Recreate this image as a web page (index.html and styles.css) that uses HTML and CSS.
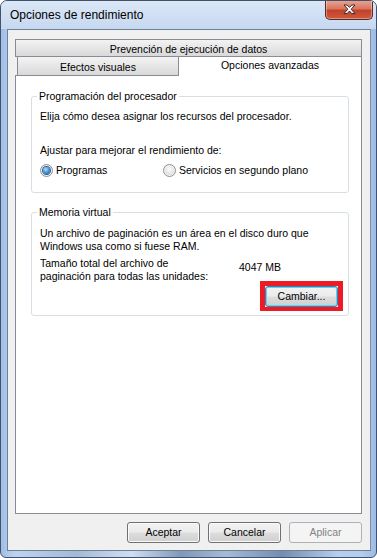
FILE: index.html
```html
<!DOCTYPE html>
<html lang="es">
<head>
  <meta charset="UTF-8">
  <title>Opciones de rendimiento</title>
  <link rel="stylesheet" href="styles.css">
</head>
<body>
  <div class="window">
    <!-- Barra de título -->
    <div class="titlebar">
      <span class="title">Opciones de rendimiento</span>
      <button class="close" title="Cerrar">
        <svg width="13" height="11" viewBox="0 0 13 11">
          <polygon points="1,1 4.2,1 6.5,3.4 8.8,1 12,1 8.2,5.2 12,9.6 8.8,9.6 6.5,7 4.2,9.6 1,9.6 4.8,5.2" fill="#fff" stroke="#3a2a28" stroke-width="1" stroke-linejoin="round"/>
        </svg>
      </button>
    </div>

    <div class="client">
      <!-- Pestañas -->
      <div class="tabs">
        <div class="tab-row">
          <div class="tab wide">Prevención de ejecución de datos</div>
        </div>
        <div class="tab-row second">
          <div class="tab visual">Efectos visuales</div>
          <div class="tab active">Opciones avanzadas</div>
        </div>
      </div>

      <div class="panel">
        <fieldset class="group cpu">
          <legend>Programación del procesador</legend>
          <p>Elija cómo desea asignar los recursos del procesador.</p>
          <p class="adjust">Ajustar para mejorar el rendimiento de:</p>
          <div class="radios">
            <label class="radio first"><span class="dot checked"></span>Programas</label>
            <label class="radio"><span class="dot"></span>Servicios en segundo plano</label>
          </div>
        </fieldset>

        <fieldset class="group memory">
          <legend>Memoria virtual</legend>
          <p>Un archivo de paginación es un área en el disco duro que<br>Windows usa como si fuese RAM.</p>
          <div class="size-row">
            <p>Tamaño total del archivo de<br>paginación para todas las unidades:</p>
            <span class="size">4047 MB</span>
          </div>
          <div class="change-row">
            <span class="highlight"><button class="btn focus">Cambiar...</button></span>
          </div>
        </fieldset>
      </div>

      <div class="actions">
        <button class="btn">Aceptar</button>
        <button class="btn">Cancelar</button>
        <button class="btn" disabled>Aplicar</button>
      </div>
    </div>
  </div>
</body>
</html>
```

FILE: styles.css
```css
* { box-sizing: border-box; }

body {
  margin: 0;
  font-family: "Liberation Sans", Arial, sans-serif;
  font-size: 10.5px;
  line-height: 13px;
  color: #000;
  background: #fff;
}

p { margin: 0; }

.window {
  width: 377px;
  height: 558px;
  display: flex;
  flex-direction: column;
  border: 1px solid #43526a;
  border-radius: 7px 7px 6px 6px;
  background:
    linear-gradient(90deg, transparent 2%, rgba(50,80,120,0.25) 20%, transparent 35%, rgba(40,70,110,0.45) 48%, rgba(40,70,110,0.2) 60%, rgba(40,70,110,0.5) 75%, transparent 90%) left bottom / 100% 6px no-repeat,
    linear-gradient(90deg, #9fbde6 0%, #c2d7f1 4%, #cfdff3 30%, #c2d6ef 70%, #b4cdec 96%, #9dbbe5 100%);
  overflow: hidden;
}

/* barra de título */
.titlebar {
  height: 28px;
  display: flex;
  align-items: flex-start;
  padding-left: 9px;
  background: linear-gradient(#dbe7f6, #c6d8f0);
}

.title {
  font-size: 12px;
  line-height: 28px;
}

.close {
  margin: -1px 3px 0 auto;
  width: 48px;
  height: 20px;
  padding: 0;
  border: 1px solid #5b2a22;
  border-top: none;
  border-radius: 0 0 5px 5px;
  background: linear-gradient(#e9a899 0%, #d9775f 45%, #c2412a 55%, #cf5a3e 100%);
  box-shadow: inset 0 0 0 1px rgba(255,255,255,0.35);
  display: flex;
  align-items: center;
  justify-content: center;
}

/* área cliente */
.client {
  margin: 0 5px 6px 6px;
  height: 522px;
  border: 1px solid #6e7f98;
  border-right-color: #7d8da4;
  background: #f0f0f0;
  padding: 9px 8px 7px 7px;
  display: flex;
  flex-direction: column;
}

.tab-row {
  display: flex;
}

.tab {
  border: 1px solid #898c95;
  background: linear-gradient(#f3f3f3, #e6e6e6 50%, #d9d9d9);
  text-align: center;
}

.tab.wide {
  flex: 1;
  height: 18px;
  line-height: 16px;
  padding-top: 1px;
}

.tab-row.second {
  margin-top: -1px;
  align-items: flex-start;
}

.tab.visual {
  margin-left: 2px;
  width: 162px;
  height: 19px;
  border-bottom: none;
  line-height: 18px;
  padding-top: 1px;
}

.tab.active {
  flex: 1;
  height: 20px;
  margin-left: -1px;
  margin-bottom: -1px;
  border-bottom: none;
  background: #fff;
  line-height: 16px;
  position: relative;
  z-index: 1;
}

.panel {
  height: 439px;
  border: 1px solid #898c95;
  background: #fff;
}

/* grupos */
.group {
  margin: 14px 12px 0 15px;
  padding: 7px 5px 15px 8px;
  border: 1px solid #d5dfe5;
  border-radius: 3px;
  min-width: 0;
}

.group legend {
  margin-left: -3px;
  padding: 0 2px;
  line-height: 13px;
}

.adjust { margin-top: 21px; }

.radios {
  display: flex;
  margin-top: 7px;
}

.radio {
  display: flex;
  align-items: center;
  height: 13px;
}

.radio.first { width: 123px; }

.dot {
  width: 13px;
  height: 13px;
  margin-right: 3px;
  border-radius: 50%;
  border: 1px solid #8e8f8f;
  background: radial-gradient(circle at 50% 40%, #fbfbfb, #dcdcdc 70%, #cfcfcf);
  box-shadow: inset 0 0 0 1px #f4f4f4;
  display: flex;
  align-items: center;
  justify-content: center;
}

.dot.checked::after {
  content: "";
  width: 7px;
  height: 7px;
  border-radius: 50%;
  background: radial-gradient(circle at 40% 35%, #b4e0fb, #3d8ad2 55%, #123f7a);
  box-shadow: 0 0 0 1px #2b5d94;
}

.group.memory {
  margin-top: 13px;
  padding-top: 8px;
  padding-bottom: 4px;
}

.size-row {
  display: flex;
  margin-top: 4px;
}

.size-row p { width: 199px; }

.size {
  margin-top: 4px;
}

.change-row {
  display: flex;
  justify-content: flex-end;
  margin-top: -2px;
}

.highlight {
  display: inline-flex;
  border: 5px solid #ed1c24;
  border-bottom-width: 4px;
}

/* botones */
.btn {
  width: 73px;
  height: 21px;
  padding: 0;
  font: inherit;
  color: #000;
  border: 1px solid #707070;
  border-radius: 3px;
  background: linear-gradient(#f2f2f2 0%, #ebebeb 48%, #dddddd 52%, #cfcfcf 100%);
  box-shadow: inset 0 0 0 1px #fbfbfb;
}

.btn.focus {
  border-color: #3c7fb1;
  box-shadow: inset 0 0 0 1px #5fd2f7;
}

.btn:disabled {
  color: #838383;
  border-color: #adb2b5;
  background: #f4f4f4;
  box-shadow: none;
}

.actions {
  display: flex;
  justify-content: flex-end;
  gap: 8px;
  margin-top: 8px;
}
```
